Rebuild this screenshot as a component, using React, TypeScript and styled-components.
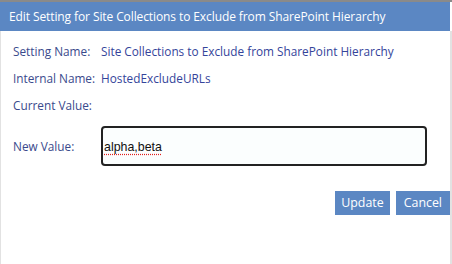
import React from 'react';
import styled, { createGlobalStyle } from 'styled-components';

const GlobalStyle = createGlobalStyle`
  html, body {
    margin: 0;
    padding: 0;
    background: #ffffff;
  }
  body {
    font-family: "Open Sans", "Noto Sans", sans-serif;
  }
`

const Dialog = styled.div`
  width: 452px;
  height: 264px;
  box-sizing: border-box;
  border-top: 2px solid #8a8a8a;
  display: flex;
  flex-direction: column;
  overflow: hidden;
`

const TitleBar = styled.div`
  height: 29px;
  margin-right: 2px;
  background: #5b87c3;
  color: #ffffff;
  font-size: 12px;
  line-height: 29px;
  padding-left: 9px;
  letter-spacing: -0.1px;
`

const Body = styled.div`
  flex: 1;
  border-left: 1px solid #e2e2e2;
  border-right: 2px solid #e2e2e2;
  padding: 6px 0 0 12px;
  display: flex;
  flex-direction: column;
`

const InfoRow = styled.div`
  display: flex;
  height: 27px;
  align-items: center;
  font-size: 11.8px;
  color: #2f3f8a;
`

const Label = styled.div`
  width: 88px;
  flex-shrink: 0;
  color: #3a4a8c;
`

const Value = styled.div`
  color: #34449a;
`

const EditRow = styled.div`
  display: flex;
  align-items: center;
  margin-top: 8px;
  font-size: 11.8px;
`

const ValueInput = styled.div`
  width: 326px;
  height: 40px;
  box-sizing: border-box;
  border: 2px solid #222222;
  border-radius: 4px;
  background: #fbfefe;
  padding: 12px 0 0 1px;
  font-family: "Liberation Sans", Arial, sans-serif;
  font-size: 12.4px;
  color: #111111;
`

const Misspelled = styled.span`
  text-decoration: underline dotted #e02020;
  text-underline-offset: 3px;
`

const Actions = styled.div`
  display: flex;
  justify-content: flex-end;
  gap: 6px;
  margin-top: 25px;
`

const Button = styled.div`
  background: #5b87c3;
  color: #ffffff;
  height: 24px;
  line-height: 24px;
  padding: 0 ${(p: { $pad: number }) => p.$pad}px;
  font-size: 12.4px;
`

const App: React.FC = () => {
  return (
    <>
      <GlobalStyle />
      <Dialog>
        <TitleBar>Edit Setting for Site Collections to Exclude from SharePoint Hierarchy</TitleBar>
        <Body>
          <InfoRow>
            <Label>Setting Name:</Label>
            <Value>Site Collections to Exclude from SharePoint Hierarchy</Value>
          </InfoRow>
          <InfoRow>
            <Label>Internal Name:</Label>
            <Value>HostedExcludeURLs</Value>
          </InfoRow>
          <InfoRow>
            <Label>Current Value:</Label>
            <Value></Value>
          </InfoRow>
          <EditRow>
            <Label>New Value:</Label>
            <ValueInput>
              <Misspelled>alpha,beta</Misspelled>
            </ValueInput>
          </EditRow>
          <Actions>
            <Button $pad={6}>Update</Button>
            <Button $pad={8}>Cancel</Button>
          </Actions>
        </Body>
      </Dialog>
    </>
  );
};

export default App
